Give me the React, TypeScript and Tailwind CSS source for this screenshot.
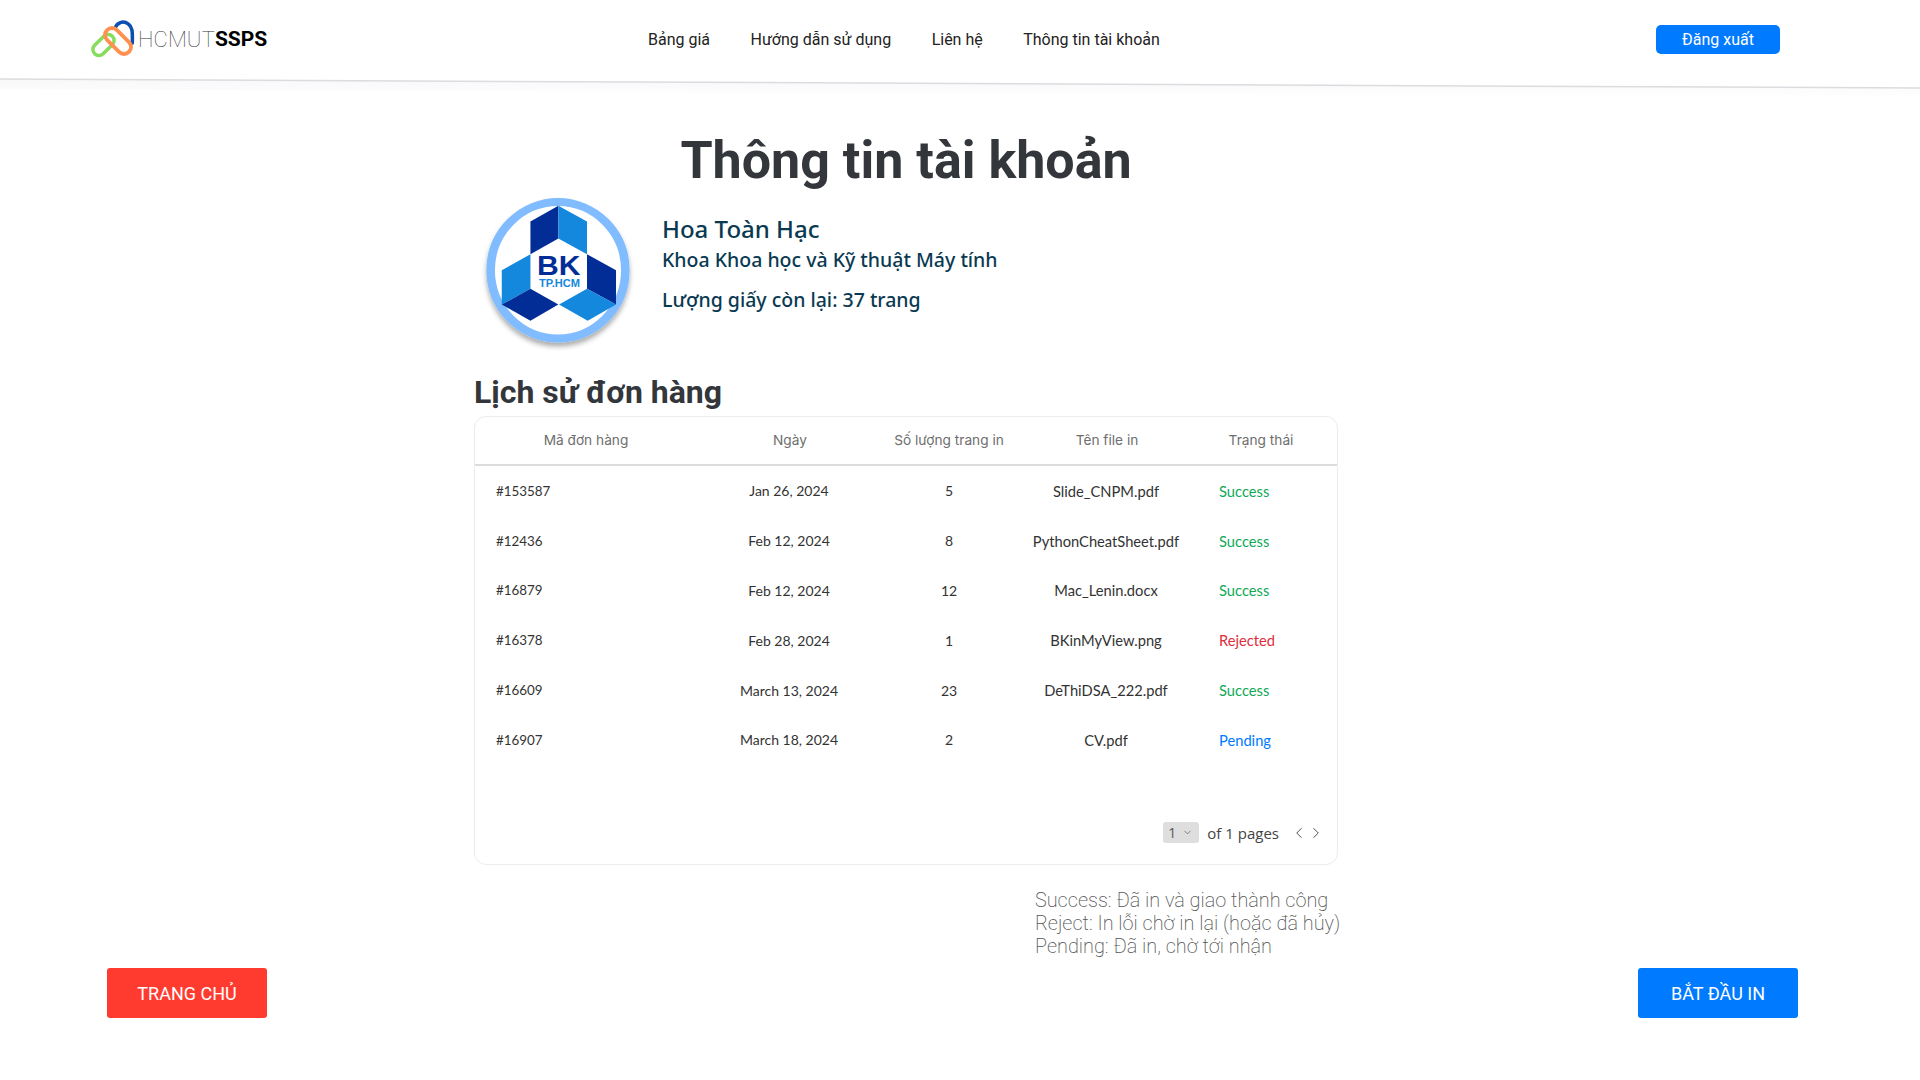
import { ChevronDown, ChevronLeft, ChevronRight } from "lucide-react";

const rows = [
  ["#153587", "Jan 26, 2024", "5", "Slide_CNPM.pdf", "Success"],
  ["#12436", "Feb 12, 2024", "8", "PythonCheatSheet.pdf", "Success"],
  ["#16879", "Feb 12, 2024", "12", "Mac_Lenin.docx", "Success"],
  ["#16378", "Feb 28, 2024", "1", "BKinMyView.png", "Rejected"],
  ["#16609", "March 13, 2024", "23", "DeThiDSA_222.pdf", "Success"],
  ["#16907", "March 18, 2024", "2", "CV.pdf", "Pending"],
];

function statusClass(s: string) {
  if (s === "Success") return "text-[#0fa958]";
  if (s === "Rejected") return "text-[#e02d3c]";
  return "text-[#007aff]";
}

function Logo() {
  return (
    <svg width="48" height="42" viewBox="0 0 48 42" fill="none" className="shrink-0">
      <path d="M27 10.3 C28.7 4.7 35.3 2 40.3 6 C44 8.7 44.7 12 44.3 25.3" stroke="#0b50b0" strokeWidth="3.5" strokeLinecap="round" />
      <rect x="-6" y="-12.5" width="12" height="25" rx="6" transform="translate(15.5 27) rotate(45)" stroke="#86dc5c" strokeWidth="3.5" />
      <rect x="-7" y="-15.5" width="14" height="31" rx="7" transform="translate(30 23) rotate(-45)" stroke="#ff9050" strokeWidth="3.8" />
    </svg>
  );
}

function BkLogo() {
  return (
    <svg width="154" height="158" viewBox="60 40 430 470" preserveAspectRatio="none" className="shrink-0">
      <defs>
        <filter id="sh" x="-20%" y="-20%" width="140%" height="140%">
          <feDropShadow dx="0" dy="12" stdDeviation="8" floodColor="#000" floodOpacity="0.32" />
        </filter>
      </defs>
      <ellipse cx="275" cy="270" rx="188" ry="203" fill="#fff" stroke="#80bcff" strokeWidth="24" filter="url(#sh)" />
      <polygon points="276,78 198,125 198,222 276,175" fill="#032d96" />
      <polygon points="276,78 356,125 356,222 276,175" fill="#1488dc" />
      <polygon points="118,270 198,222 198,325 118,372" fill="#1488dc" />
      <polygon points="118,372 198,325 276,372 198,420" fill="#032d96" />
      <polygon points="356,222 437,270 437,372 356,325" fill="#032d96" />
      <polygon points="278,372 356,325 437,372 358,420" fill="#1488dc" />
      <text x="277" y="285" textAnchor="middle" fontFamily="'Liberation Sans'" fontWeight="700" fontSize="84" fill="#032d96">BK</text>
      <text x="279" y="320" textAnchor="middle" fontFamily="'Liberation Sans'" fontWeight="700" fontSize="31" fill="#1488dc">TP.HCM</text>
    </svg>
  );
}

export default function App() {
  return (
    <div className="relative w-full h-[1080px] bg-white overflow-hidden font-['Roboto',sans-serif]">
      <header className="h-[78px] flex items-center">
        <div className="w-[648px] pl-[88px] flex items-center">
          <Logo />
          <span className="ml-[2px] mt-[1px] text-[22px] tracking-[0.1px] font-thin text-[#333]">HCMUT</span>
          <span className="mt-[1px] text-[21px] font-bold text-black">SSPS</span>
        </div>
        <nav className="flex gap-[40.5px] text-[16px] text-[#222] mt-[2px]">
          <a>Bảng giá</a>
          <a>Hướng dẫn sử dụng</a>
          <a>Liên hệ</a>
          <a>Thông tin tài khoản</a>
        </nav>
        <button className="ml-auto mr-[140px] w-[124px] h-[29px] pt-[1px] rounded-[5px] bg-[#007aff] text-white text-[16px]">Đăng xuất</button>
      </header>

      <svg className="absolute left-0 top-[76px]" width="1920" height="24" viewBox="0 0 1920 24">
        <defs>
          <linearGradient id="fade" x1="0" y1="0" x2="0" y2="1">
            <stop offset="0" stopColor="#f8f8fa" />
            <stop offset="1" stopColor="#ffffff" />
          </linearGradient>
        </defs>
        <polygon points="0,3 1920,12 1920,22 0,13" fill="url(#fade)" />
        <line x1="0" y1="3" x2="1920" y2="12" stroke="#dcdce0" strokeWidth="1.5" />
      </svg>

      <main className="ml-[474px] w-[864px]">
        <h1 className="mt-[51px] text-center text-[52px] leading-[64px] font-bold text-[#33363b]">Thông tin tài khoản</h1>
        <section className="flex ml-[7px] h-[180px]">
          <BkLogo />
          <div className="ml-[27px] pt-[20px] text-[#0a3a52] font-['Noto_Sans',sans-serif] font-medium">
            <p className="text-[24px] leading-[32px]">Hoa Toàn Hạc</p>
            <p className="text-[19.5px] leading-[28px] mt-[1px]">Khoa Khoa học và Kỹ thuật Máy tính</p>
            <p className="text-[19.5px] leading-[28px] mt-[12px]">Lượng giấy còn lại: 37 trang</p>
          </div>
        </section>
        <h2 className="text-[32px] leading-[40px] font-bold text-[#33363b] mt-[-1px]">Lịch sử đơn hàng</h2>
        <div className="mt-[4px] h-[449px] rounded-[12px] border border-[#ececee] flex flex-col font-['Inter',sans-serif]">
          <div className="grid grid-cols-[222px_186px_132px_184px_1fr] h-[49px] items-center text-center text-[13.7px] text-[#6e6e6e] border-b-2 border-[#dcdcdc]">
            <div>Mã đơn hàng</div>
            <div>Ngày</div>
            <div>Số lượng trang in</div>
            <div>Tên file in</div>
            <div className="pr-[14px]">Trạng thái</div>
          </div>
          <div className="font-['Lato',sans-serif] text-[14.7px] text-[#333]">
            {rows.map((r) => (
              <div key={r[0]} className="grid grid-cols-[222px_186px_132px_184px_1fr] h-[49.8px] items-center text-center">
                <div className="text-left pl-[21px] text-[13.4px]">{r[0]}</div>
                <div className="pr-[2px] text-[14px]">{r[1]}</div>
                <div className="text-[14px]">{r[2]}</div>
                <div className="pr-[2px]">{r[3]}</div>
                <div className={"text-left pl-[20px] " + statusClass(r[4])}>{r[4]}</div>
              </div>
            ))}
          </div>
          <div className="mt-auto mb-[20px] pr-[12px] flex items-center justify-end text-[15px] text-[#444] font-['Open_Sans',sans-serif] font-medium">
            <div className="w-[36px] h-[21px] rounded-[3px] bg-[#dedede] flex items-center pl-[5px] text-[14px] text-[#555]">
              1<ChevronDown size={11} className="ml-[6px]" strokeWidth={1.5} />
            </div>
            <span className="ml-[8px]">of 1 pages</span>
            <ChevronLeft size={18} className="ml-[11px]" strokeWidth={1.25} />
            <ChevronRight size={18} className="ml-[-1px]" strokeWidth={1.25} />
          </div>
        </div>
        <div className="mt-[24px] ml-[561px] w-[340px] text-[19.85px] leading-[23px] font-extralight text-[#555]">
          <p>Success: Đã in và giao thành công</p>
          <p>Reject: In lỗi chờ in lại (hoặc đã hủy)</p>
          <p>Pending: Đã in, chờ tới nhận</p>
        </div>
      </main>

      <footer className="mt-[10px] pl-[107px] pr-[122px] flex justify-between">
        <button className="w-[160px] h-[50px] rounded-[3px] bg-[#ff3b30] text-white text-[18px]">TRANG CHỦ</button>
        <button className="w-[160px] h-[50px] rounded-[3px] bg-[#007aff] text-white text-[18px]">BẮT ĐẦU IN</button>
      </footer>
    </div>
  );
}
